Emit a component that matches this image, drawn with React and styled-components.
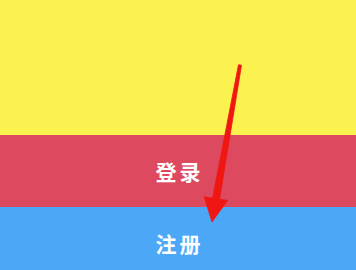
import React from "react"
import styled, { createGlobalStyle } from "styled-components"

const GlobalStyle = createGlobalStyle`
  html, body {
    margin: 0;
    padding: 0;
    overflow: hidden;
  }
  body {
    font-family: "Noto Sans CJK SC", "Noto Sans", sans-serif;
  }
`

const Screen = styled.div`
  position: relative;
  width: 356px;
  height: 270px;
  overflow: hidden;
  display: flex;
  flex-direction: column;
`

const Hero = styled.div`
  height: 135px;
  flex-shrink: 0;
  background: #fbf24f;
`

const ActionButton = styled.button`
  height: 72px;
  flex-shrink: 0;
  border: none;
  margin: 0;
  padding: 0;
  display: flex;
  align-items: center;
  justify-content: center;
  background: ${(p) => p.$bg};
  color: #ffffff;
  font-family: "Noto Sans CJK SC", sans-serif;
  font-size: 21px;
  font-weight: 700;
  letter-spacing: 3px;
  text-indent: 3px;
`

const Arrow = styled.svg`
  position: absolute;
  left: 0;
  top: 0;
  pointer-events: none;
`

export default function App() {
  return (
    <>
      <GlobalStyle />
      <Screen>
        <Hero />
        <ActionButton $bg="#dd4a5f">登录</ActionButton>
        <ActionButton $bg="#4ca8f6">注册</ActionButton>
        <Arrow width="356" height="270" viewBox="0 0 356 270">
          <polygon
            points="238.5,64.7 241.5,65.3 219.6,199 227.5,200.5 212,222 204.2,196.8 212.6,198"
            fill="#f01612"
            stroke="#f01612"
            strokeWidth="0.8"
            strokeLinejoin="round"
          />
        </Arrow>
      </Screen>
    </>
  )
}
